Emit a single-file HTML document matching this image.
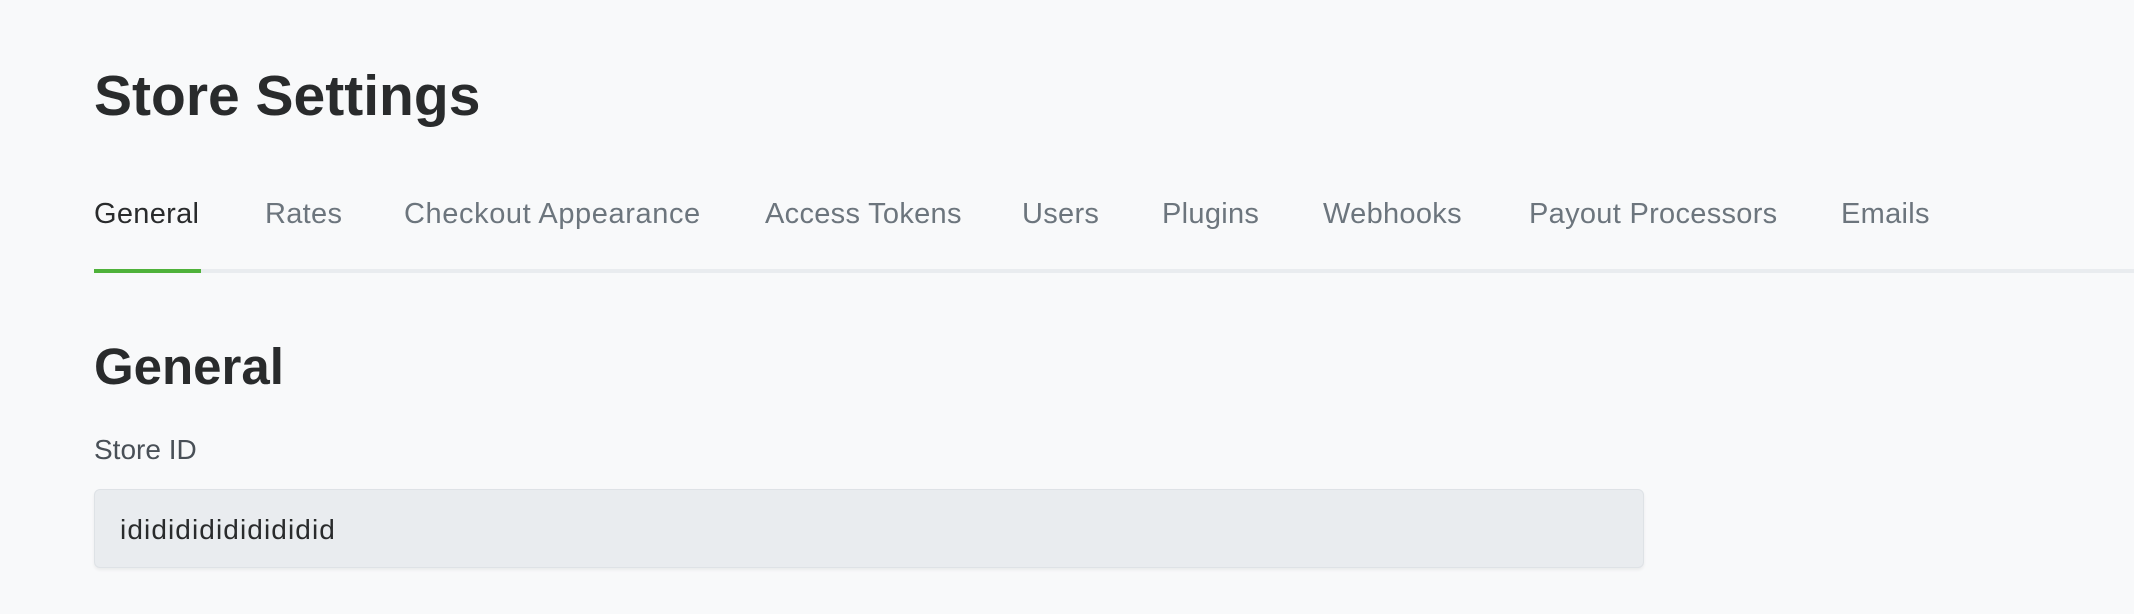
<!DOCTYPE html>
<html><head><meta charset="utf-8"><style>
html,body{margin:0;padding:0;width:2134px;height:614px;background:#f8f9fa;overflow:hidden;font-family:"Liberation Sans",sans-serif;}
.a{position:absolute;white-space:nowrap;}
h1{position:absolute;margin:0;left:94px;top:58px;font-size:57px;font-weight:bold;color:#292b2c;line-height:76px;letter-spacing:0px}
.tab{position:absolute;top:196px;font-size:29px;line-height:36px;color:#6c757d;letter-spacing:0.3px}
h2{position:absolute;margin:0;left:94px;top:332px;font-size:51px;font-weight:bold;color:#292b2c;line-height:70px;}
</style></head><body>
<h1>Store Settings</h1>
<div class="tab" style="left:94px;color:#292b2c">General</div>
<div class="tab" style="left:265px">Rates</div>
<div class="tab" style="left:404px;letter-spacing:0.6px">Checkout Appearance</div>
<div class="tab" style="left:765px">Access Tokens</div>
<div class="tab" style="left:1022px">Users</div>
<div class="tab" style="left:1162px">Plugins</div>
<div class="tab" style="left:1323px">Webhooks</div>
<div class="tab" style="left:1529px">Payout Processors</div>
<div class="tab" style="left:1841px">Emails</div>
<div class="a" style="left:94px;top:269px;width:2040px;height:4px;background:#e9ecef"></div>
<div class="a" style="left:94px;top:269px;width:107px;height:4px;background:#4fb23a"></div>
<h2>General</h2>
<div class="a" style="left:94px;top:432px;font-size:28px;line-height:36px;color:#495057">Store ID</div>
<div class="a" style="left:94px;top:489px;width:1548px;height:77px;background:#e9ecef;border:1px solid #dee2e6;border-radius:6px;box-shadow:0 2px 3px rgba(0,0,0,0.06)"></div>
<div class="a" style="left:120px;top:512px;font-size:28px;line-height:36px;color:#292b2c;letter-spacing:1.1px">ididididididididid</div>
</body></html>
